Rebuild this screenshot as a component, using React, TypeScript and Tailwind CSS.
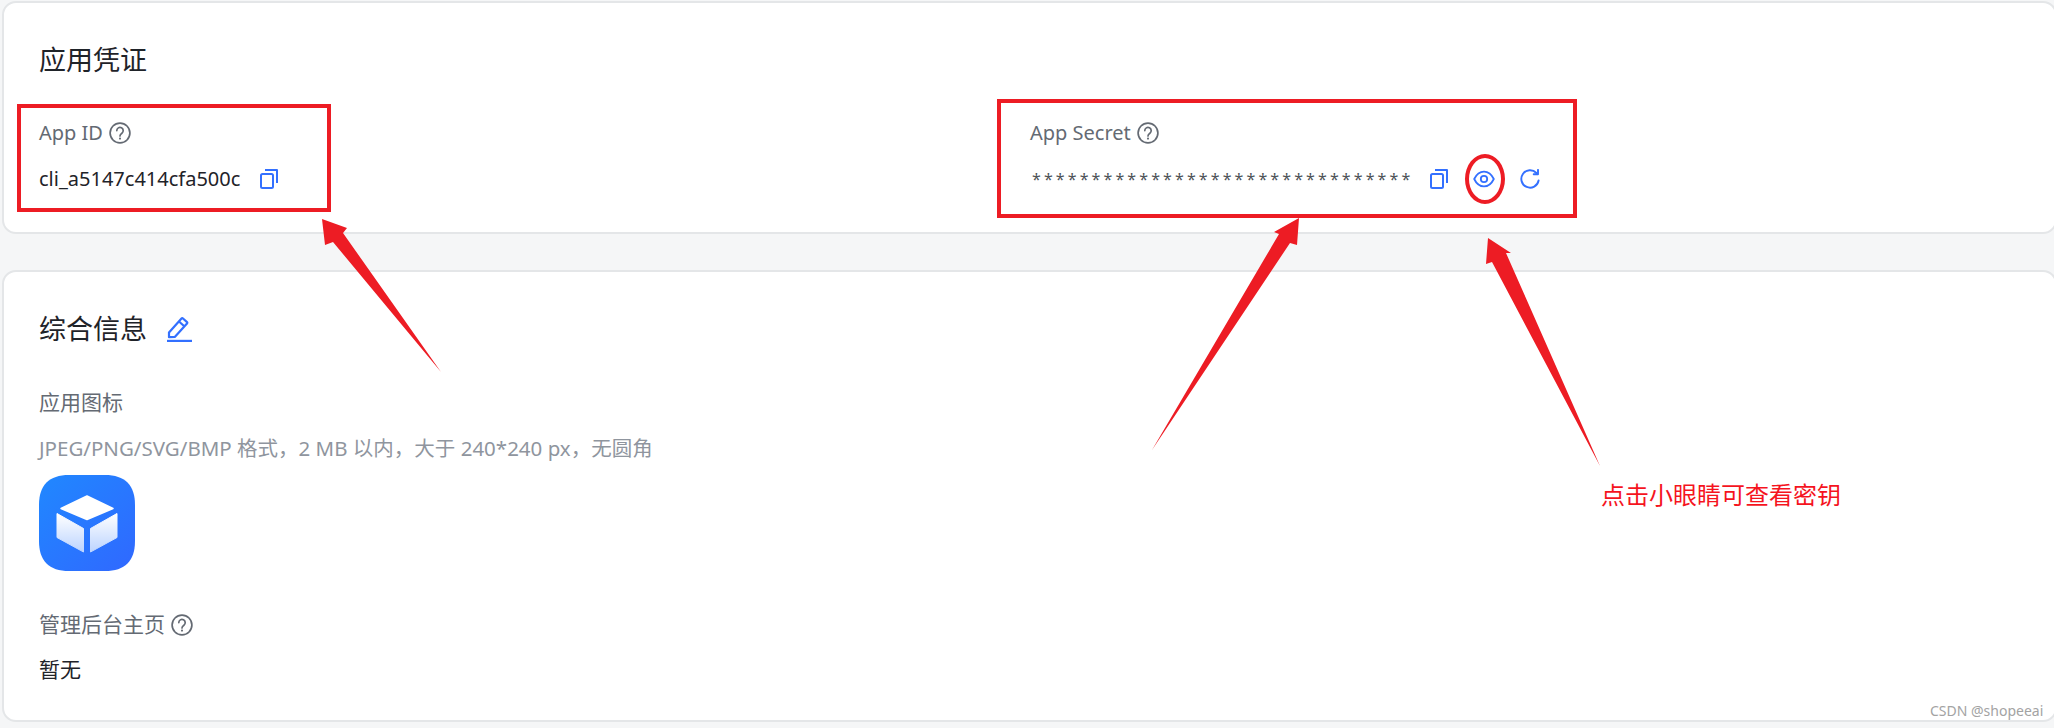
import React from "react";

function HelpIcon() {
  return (
    <svg width="22" height="22" viewBox="0 0 22 22" fill="none" stroke="#646a73" strokeWidth="1.7" strokeLinecap="round">
      <circle cx="11" cy="11" r="9.9" />
      <path d="M7.800 8.600a3.200 3.200 0 1 1 5.100 2.600c-1.100.8-1.900 1.400-1.900 2.700" />
      <path d="M11 16.500v.1" strokeWidth="2.100" />
    </svg>
  );
}

function CopyIcon() {
  return (
    <svg width="18" height="20" viewBox="0 0 18 20" fill="none" stroke="#3370ff" strokeWidth="2" strokeLinejoin="round">
      <rect x="1" y="5" width="12" height="14" rx="1.5" />
      <path d="M5 1h12v13" />
    </svg>
  );
}

function EyeIcon() {
  return (
    <svg width="22" height="18" viewBox="0 0 22 18" fill="none" stroke="#3370ff" strokeWidth="1.8">
      <path d="M1.200 9C3.400 4.400 6.800 1.600 11 1.600S18.600 4.400 20.800 9C18.600 13.600 15.200 16.400 11 16.400S3.400 13.600 1.200 9Z" strokeLinejoin="round" />
      <circle cx="11" cy="9" r="3.200" />
    </svg>
  );
}

function RefreshIcon() {
  return (
    <svg width="20" height="20" viewBox="0 0 20 20" fill="none" stroke="#3370ff" strokeWidth="1.900" strokeLinecap="round" strokeLinejoin="round">
      <path d="M18.600 11.500A8.700 8.700 0 1 1 16.400 4" />
      <path d="M18 .9v4.300h-4.300" />
    </svg>
  );
}

function EditIcon() {
  return (
    <svg width="25" height="25" viewBox="0 0 25 25" fill="none" stroke="#3370ff" strokeWidth="2.200" strokeLinejoin="round">
      <path d="M2 20.200V15.500L14.500 1.500a1 1 0 0 1 1.500 0l4 3.600a1 1 0 0 1 0 1.500L8 19.800Z" />
      <path d="M12 4.500l5 4.500" />
      <path d="M0 24h25" strokeWidth="2.400" />
    </svg>
  );
}

function AppLogo() {
  return (
    <svg width="96" height="96" viewBox="0 0 96 96">
      <defs>
        <linearGradient id="logoBg" x1="0" y1="0" x2="1" y2="1">
          <stop offset="0" stopColor="#2088ff" />
          <stop offset="1" stopColor="#3068ff" />
        </linearGradient>
        <linearGradient id="logoFace" x1="0" y1="0" x2="0" y2="1">
          <stop offset="0" stopColor="#ffffff" />
          <stop offset="1" stopColor="#bcd4ff" />
        </linearGradient>
      </defs>
      <path d="M30 0H66C86 0 96 10 96 30V66C96 86 86 96 66 96H30C10 96 0 86 0 66V30C0 10 10 0 30 0Z" fill="url(#logoBg)" />
      <path d="M48 21 74 33.500 48 44.500 22 33.500Z" fill="#fff" stroke="#fff" strokeWidth="1.500" strokeLinejoin="round" />
      <path d="M18 38.500 44.500 53.500V77L18 62.500Z" fill="url(#logoFace)" stroke="url(#logoFace)" strokeWidth="1" strokeLinejoin="round" />
      <path d="M78 38.500 51.500 53.500V77L78 62.500Z" fill="url(#logoFace)" stroke="url(#logoFace)" strokeWidth="1" strokeLinejoin="round" />
    </svg>
  );
}

function Label({ text, help }: { text: string; help?: boolean }) {
  return (
    <div className="flex items-center gap-[6px] h-[30px] text-[#646a73]">
      <span>{text}</span>
      {help && <HelpIcon />}
    </div>
  );
}

// red markup drawn over the screenshot
function Annotations() {
  return (
    <>
      <div className="absolute left-[17px] top-[104px] w-[314px] h-[108px] border-4 border-[#ed1c24]" />
      <div className="absolute left-[997px] top-[99px] w-[580px] h-[119px] border-4 border-[#ed1c24]" />
      <div className="absolute left-[1465px] top-[154px] w-[40px] h-[50px] rounded-[50%] border-4 border-[#ed1c24]" />
      <svg className="absolute left-0 top-0" width="2054" height="728" fill="#ed1c24">
        <polygon points="322,219 347,228 343,233 441,372 333,242 325,245" />
        <polygon points="1299,218 1297,245 1290,243 1152,450 1279,234 1274,232" />
        <polygon points="1488,238 1511,253 1506,253 1600,466 1492,262 1486,264" />
      </svg>
      <div className="absolute left-[1601px] top-[481px] text-[24px] leading-[28px] text-[#f5141e] whitespace-nowrap">点击小眼睛可查看密钥</div>
      <div className="absolute left-[1930px] top-[703px] text-[14px] leading-[16px] text-[#a3a3a3] whitespace-nowrap">CSDN @shopeeai</div>
    </>
  );
}

export default function App() {
  return (
    <div
      className="relative w-[2054px] h-[728px] overflow-hidden bg-[#f5f6f7] pt-[1px] pl-[2px] text-[20px] text-[#1f2329]"
      style={{ fontFamily: '"Noto Sans", "Noto Sans CJK SC", sans-serif' }}
    >
      <div className="w-[2055px] h-[233px] bg-white border-2 border-[#e4e6e8] rounded-[14px] pl-[35px]">
        <div className="pt-[38px] text-[27px] leading-[38px]">应用凭证</div>
        <div className="flex mt-[39px]">
          <div className="w-[991px]">
            <Label text="App ID" help />
            <div className="flex items-center gap-[20px] mt-[16px] h-[30px]">
              <span>cli_a5147c414cfa500c</span>
              <CopyIcon />
            </div>
          </div>
          <div>
            <Label text="App Secret" help />
            <div className="flex items-center mt-[16px] h-[30px]">
              <span className="w-[400px] pl-[2px] text-[16px] text-[#4e5358] tracking-[3.100px] whitespace-nowrap">********************************</span>
              <CopyIcon />
              <span className="ml-[25px]"><EyeIcon /></span>
              <span className="ml-[25px]"><RefreshIcon /></span>
            </div>
          </div>
        </div>
      </div>

      <div className="w-[2055px] h-[452px] mt-[36px] bg-white border-2 border-[#e4e6e8] rounded-[14px] pl-[35px]">
        <div className="flex items-center gap-[20px] pt-[38px] text-[27px] leading-[38px]">
          <span>综合信息</span>
          <EditIcon />
        </div>
        <div className="mt-[40px] text-[21px]">
          <Label text="应用图标" />
        </div>
        <div className="mt-[15px] text-[20.500px] leading-[30px] text-[#8f959e]">JPEG/PNG/SVG/BMP 格式，2 MB 以内，大于 240*240 px，无圆角</div>
        <div className="mt-[12px]">
          <AppLogo />
        </div>
        <div className="mt-[39px] text-[21px]">
          <Label text="管理后台主页" help />
        </div>
        <div className="mt-[14px] text-[21px] leading-[30px]">暂无</div>
      </div>

      <Annotations />
    </div>
  );
}
